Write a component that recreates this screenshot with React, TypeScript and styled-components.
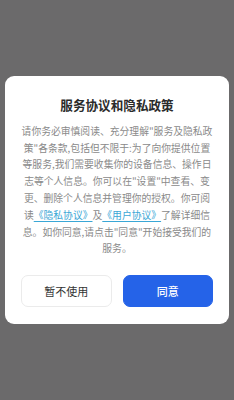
import React from "react";
import styled, { createGlobalStyle } from "styled-components";

const Global = createGlobalStyle`
  html, body { margin: 0; padding: 0; }
  body {
    background: #6b6a6b;
    font-family: "Noto Sans CJK SC", "Noto Sans", sans-serif;
  }
`;

const Page = styled.div`
  height: 400px;
  display: flex;
  align-items: center;
  justify-content: center;
  padding: 0 5px;
  box-sizing: border-box;
`;

const Card = styled.div`
  width: 224px;
  background: #ffffff;
  border-radius: 9px;
  padding: 20px 16px 17px;
  box-sizing: border-box;
  display: flex;
  flex-direction: column;
  align-items: center;
`;

const Title = styled.h2`
  margin: 0;
  font-size: 12.6px;
  line-height: 18px;
  font-weight: 700;
  color: #2b2b2b;
  text-align: center;
`;

const Body = styled.p`
  margin: 9px 0 0;
  width: 192px;
  font-size: 9.8px;
  line-height: 16.8px;
  color: #8a8a8a;
  text-align: center;
`;

const Link = styled.a`
  color: #3aa7d6;
  text-decoration: underline;
  text-underline-offset: 2px;
`;

const Actions = styled.div`
  margin-top: 18px;
  width: 100%;
  display: grid;
  grid-template-columns: 1fr 1fr;
  gap: 11px;
`;

const Button = styled.button<{ $primary?: boolean }>`
  height: 32px;
  border-radius: 7px;
  font-family: inherit;
  font-size: 11px;
  font-weight: ${(p) => (p.$primary ? 500 : 400)};
  cursor: pointer;
  border: 1px solid ${(p) => (p.$primary ? "#2563e8" : "#ebebeb")};
  background: ${(p) => (p.$primary ? "#2563e8" : "#ffffff")};
  color: ${(p) => (p.$primary ? "#ffffff" : "#333333")};
`;

export default function App() {
  return (
    <>
      <Global />
      <Page>
        <Card>
          <Title>服务协议和隐私政策</Title>
          <Body>
            请你务必审慎阅读、充分理解"服务及隐私政策"各条款,包括但不限于:为了向你提供位置等服务,我们需要收集你的设备信息、操作日志等个人信息。你可以在"设置"中查看、变更、删除个人信息并管理你的授权。你可阅读
            <Link>《隐私协议》</Link>及<Link>《用户协议》</Link>了解详细信息。如你同意,请点击"同意"开始接受我们的服务。
          </Body>
          <Actions>
            <Button>暂不使用</Button>
            <Button $primary>同意</Button>
          </Actions>
        </Card>
      </Page>
    </>
  );
}
